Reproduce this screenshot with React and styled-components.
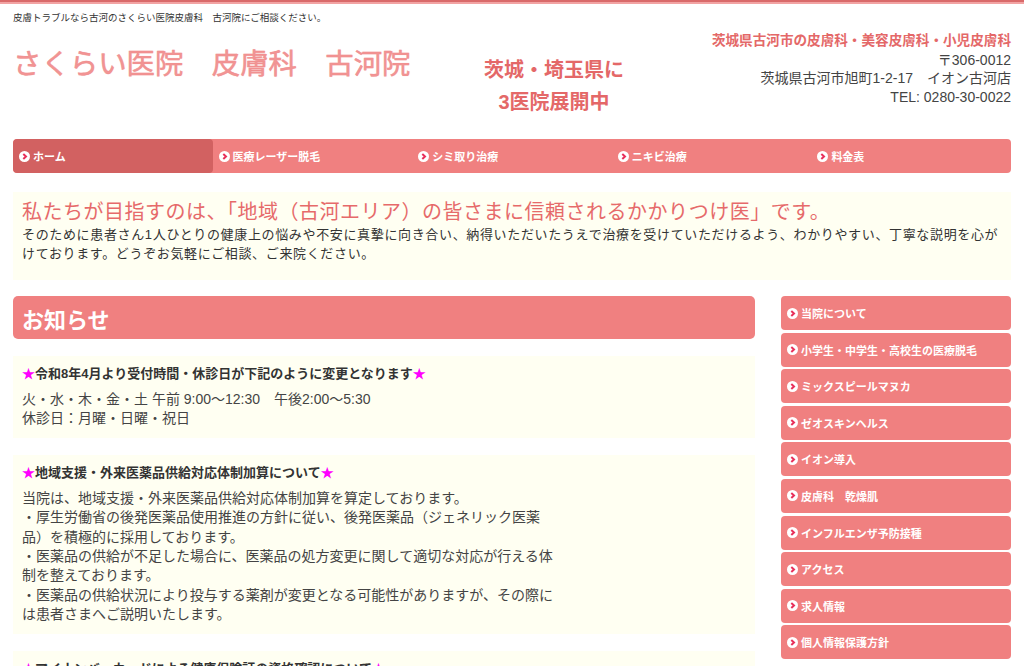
import React from "react";
import styled, { createGlobalStyle } from "styled-components";

const GlobalStyle = createGlobalStyle`
  body {
    margin: 0;
    background: #fff;
    font-family: "Liberation Sans", "Noto Sans CJK JP", sans-serif;
    color: #333;
  }
`;

const TopLine = styled.div`
  height: 4px;
  background: linear-gradient(#d96a6a 0, #d96a6a 2px, #f2a3a3 2px, #f2a3a3 4px);
`;

const Page = styled.div`
  padding: 0 13px;
`;

const Header = styled.header`
  display: flex;
  height: 135px;
`;

const Brand = styled.div`
  width: 471px;
`;

const Tagline = styled.p`
  margin: 0;
  padding-top: 7px;
  font-size: 9.5px;
  line-height: 14px;
  color: #333;
`;

const Title = styled.h1`
  margin: 21px 0 0;
  font-size: 28.4px;
  line-height: 36px;
  font-weight: 400;
  color: #f29494;
  text-shadow: 0 0 1px #f7c0c0;
  -webkit-text-stroke: 0.4px #ef8c8c;
  white-space: nowrap;
`;

const Catch = styled.div`
  padding-top: 50px;
  text-align: center;
  font-size: 20px;
  font-weight: 700;
  line-height: 32px;
  color: #e46868;
`;

const Contact = styled.address`
  margin-left: auto;
  font-style: normal;
  text-align: right;
  padding-top: 28px;
  font-size: 14px;
  line-height: 18.6px;
  color: #444;
`;

const ContactLead = styled.div`
  font-size: 13.6px;
  font-weight: 700;
  color: #e46868;
`;

const Nav = styled.nav`
  display: flex;
  height: 34px;
  background: #f08080;
  border-radius: 4px;
  overflow: hidden;
`;

const NavItem = styled.a`
  flex: 1;
  display: flex;
  align-items: center;
  gap: 3px;
  padding-left: 6px;
  font-size: 11px;
  font-weight: 700;
  color: #fff;
  background: ${(p) => (p.$active ? "#d26161" : "transparent")};
  border-radius: ${(p) => (p.$active ? "4px" : "0")};
`;

const Intro = styled.section`
  margin-top: 19px;
  background: #fffff2;
  padding: 7px 9px 17px;
`;

const IntroHead = styled.h2`
  margin: 0;
  font-size: 20px;
  line-height: 26px;
  font-weight: 400;
  letter-spacing: 0.5px;
  color: #e66a6a;
`;

const IntroText = styled.p`
  margin: 0;
  font-size: 13px;
  line-height: 19px;
  letter-spacing: 0.65px;
  color: #333;
`;

const Main = styled.div`
  display: flex;
  gap: 26px;
  margin-top: 16px;
`;

const Column = styled.div`
  flex: 1;
`;

const SectionHead = styled.h2`
  margin: 0;
  height: 43px;
  display: flex;
  align-items: center;
  padding-left: 9px;
  background: #f08080;
  border-radius: 5px;
  color: #fff;
  font-size: 22px;
  font-weight: 700;
`;

const News = styled.article`
  margin-top: 17px;
  background: #fffff2;
  padding: 8px 9px 9px;
`;

const NewsTitle = styled.h3`
  margin: 0;
  font-size: 13px;
  line-height: 20px;
  font-weight: 700;
  color: #333;
`;

const Star = styled.span`
  color: #ff00ff;
`;

const NewsBody = styled.p`
  margin: 6px 0 0;
  font-size: 14px;
  line-height: 19.4px;
  color: #444;
`;

const Side = styled.aside`
  width: 230px;
  display: flex;
  flex-direction: column;
  gap: 2.6px;
`;

const SideItem = styled.a`
  display: flex;
  align-items: center;
  gap: 3px;
  height: 34px;
  padding-left: 6px;
  background: #f08080;
  border-radius: 4px;
  color: #fff;
  font-size: 11px;
  font-weight: 700;
`;

const Arrow = () => (
  <svg width="11" height="11" viewBox="0 0 11 11">
    <circle cx="5.5" cy="5.5" r="5.5" fill="#fff" />
    <path d="M4.3 3 L7 5.5 L4.3 8" fill="none" stroke="#e8305a" strokeWidth="2" />
  </svg>
);

const navItems = ["ホーム", "医療レーザー脱毛", "シミ取り治療", "ニキビ治療", "料金表"];

const sideItems = [
  "当院について",
  "小学生・中学生・高校生の医療脱毛",
  "ミックスピールマヌカ",
  "ゼオスキンヘルス",
  "イオン導入",
  "皮膚科　乾燥肌",
  "インフルエンザ予防接種",
  "アクセス",
  "求人情報",
  "個人情報保護方針",
];

// lines kept as they wrap in the original page
const news = [
  {
    title: "令和8年4月より受付時間・休診日が下記のように変更となります",
    body: ["火・水・木・金・土  午前 9:00〜12:30　午後2:00〜5:30", "休診日：月曜・日曜・祝日"],
  },
  {
    title: "地域支援・外来医薬品供給対応体制加算について",
    body: [
      "当院は、地域支援・外来医薬品供給対応体制加算を算定しております。",
      "・厚生労働省の後発医薬品使用推進の方針に従い、後発医薬品（ジェネリック医薬",
      "品）を積極的に採用しております。",
      "・医薬品の供給が不足した場合に、医薬品の処方変更に関して適切な対応が行える体",
      "制を整えております。",
      "・医薬品の供給状況により投与する薬剤が変更となる可能性がありますが、その際に",
      "は患者さまへご説明いたします。",
    ],
  },
  {
    title: "マイナンバーカードによる健康保険証の資格確認について",
    body: ["当院ではマイナンバーカードによる健康保険証の資格確認を行っております。"],
  },
];

export default function App() {
  return (
    <>
      <GlobalStyle />
      <TopLine />
      <Page>
        <Header>
          <Brand>
            <Tagline>皮膚トラブルなら古河のさくらい医院皮膚科　古河院にご相談ください。</Tagline>
            <Title>さくらい医院　皮膚科　古河院</Title>
          </Brand>
          <Catch>
            茨城・埼玉県に
            <br />
            3医院展開中
          </Catch>
          <Contact>
            <ContactLead>茨城県古河市の皮膚科・美容皮膚科・小児皮膚科</ContactLead>
            〒306-0012
            <br />
            茨城県古河市旭町1-2-17　イオン古河店
            <br />
            TEL: 0280-30-0022
          </Contact>
        </Header>

        <Nav>
          {navItems.map((n, i) => (
            <NavItem key={n} $active={i === 0}>
              <Arrow />
              {n}
            </NavItem>
          ))}
        </Nav>

        <Intro>
          <IntroHead>私たちが目指すのは、「地域（古河エリア）の皆さまに信頼されるかかりつけ医」です。</IntroHead>
          <IntroText>
            そのために患者さん1人ひとりの健康上の悩みや不安に真摯に向き合い、納得いただいたうえで治療を受けていただけるよう、わかりやすい、丁寧な説明を心がけております。どうぞお気軽にご相談、ご来院ください。
          </IntroText>
        </Intro>

        <Main>
          <Column>
            <SectionHead>お知らせ</SectionHead>
            {news.map((n) => (
              <News key={n.title}>
                <NewsTitle>
                  <Star>★</Star>
                  {n.title}
                  <Star>★</Star>
                </NewsTitle>
                <NewsBody>
                  {n.body.map((line, i) => (
                    <React.Fragment key={i}>
                      {i > 0 && <br />}
                      {line}
                    </React.Fragment>
                  ))}
                </NewsBody>
              </News>
            ))}
          </Column>
          <Side>
            {sideItems.map((s) => (
              <SideItem key={s}>
                <Arrow />
                {s}
              </SideItem>
            ))}
          </Side>
        </Main>
      </Page>
    </>
  );
}
